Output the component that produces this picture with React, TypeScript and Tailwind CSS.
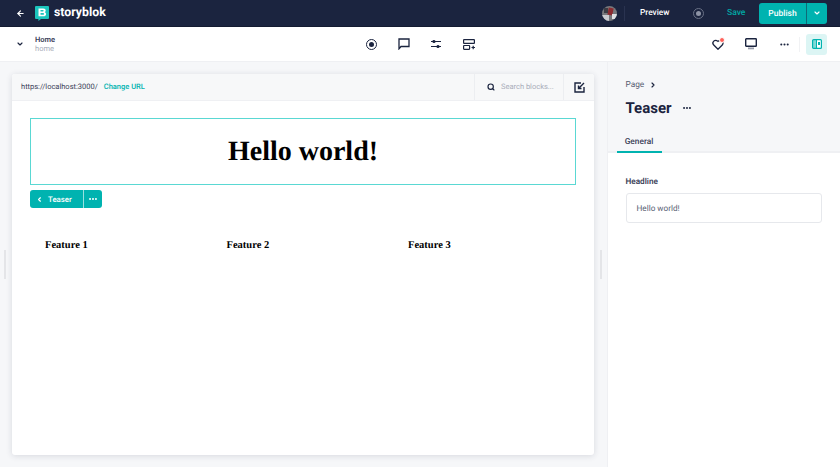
import React from 'react';
import { ArrowLeft, ChevronDown, ChevronLeft, ChevronRight, Ellipsis, Search } from 'lucide-react';

const ui = "font-['Roboto','Inter',sans-serif]";

const Logo = () => (
  <svg width="14" height="15" viewBox="0 0 14 15">
    <path d="M1 0h12a1 1 0 0 1 1 1v11a1 1 0 0 1-1 1H6l-2.600 2v-2H1a1 1 0 0 1-1-1V1a1 1 0 0 1 1-1z" fill="#1bc5bd" />
    <path d="M3.500 2.500h4.700c1.600 0 2.500.9 2.500 2.100 0 .7-.3 1.200-.9 1.600.8.300 1.300 1 1.300 1.800 0 1.400-1.100 2.300-2.700 2.300H3.500V2.500zm2 1.600v1.500h2.300c.5 0 .9-.3.9-.8s-.4-.7-.9-.7H5.500zm0 3v1.700h2.500c.6 0 1-.3 1-.9s-.4-.8-1-.8H5.500z" fill="#ffffff" fillRule="evenodd" />
  </svg>
);

const Avatar = () => (
  <div className="relative h-[15px] w-[15px] overflow-hidden rounded-full bg-[#77787c]">
    <div className="absolute left-[6px] top-[2px] h-[7px] w-[5px] rotate-12 bg-[#8c2b30]" />
    <div className="absolute left-0 top-[9px] h-[6px] w-[7px] bg-[#c9cbd0]" />
    <div className="absolute left-[10px] top-[8px] h-[5px] w-[5px] bg-[#dfe0e3]" />
    <div className="absolute left-[2px] top-[2px] h-[5px] w-[4px] bg-[#3b3d45]" />
  </div>
);

const TopBar = () => (
  <header className="flex h-[27px] shrink-0 items-center border-b border-[#141b31] bg-[#1b243f]">
    <ArrowLeft size={9} strokeWidth={3} className="ml-[16px] text-white" />
    <div className="ml-[10px] flex items-center"><Logo /></div>
    <span className={`${ui} ml-[5px] mt-[1px] text-[12.300px] font-bold text-white`}>storyblok</span>
    <div className="ml-auto flex items-center">
      <Avatar />
      <div className="ml-[7px] h-[15px] w-px bg-[#2a3350]" />
      <span className={`${ui} ml-[15px] mt-[1px] w-[29px] whitespace-nowrap text-[8.300px] font-medium text-white`}>Preview</span>
      <div className="ml-[24px] flex h-[11px] w-[11px] items-center justify-center rounded-full border border-[#6a7186]">
        <div className="h-[5px] w-[5px] rounded-full bg-[#8d93a5]" />
      </div>
      <span className={`${ui} ml-[23px] mt-[1px] w-[18px] whitespace-nowrap text-[8.500px] font-medium text-[#00a8a5]`}>Save</span>
      <div className="ml-[14px] mr-[13px] flex h-[21px] overflow-hidden rounded-[3px] bg-[#00b3b0]">
        <span className={`${ui} flex w-[47px] items-center justify-center pt-[2px] text-[8.500px] font-medium text-white`}>Publish</span>
        <div className="flex w-[21px] items-center justify-center border-l border-[#1b243f]/50">
          <ChevronDown size={8} strokeWidth={3.500} className="text-white" />
        </div>
      </div>
    </div>
  </header>
);

const SubBar = () => (
  <div className="flex h-[35px] shrink-0 items-center border-b border-[#eff0f3] bg-white">
    <ChevronDown size={8} strokeWidth={3.500} className="ml-[16px] text-[#1b243f]" />
    <div className={`${ui} ml-[11px] flex w-[24px] flex-col pt-[1px] leading-[8.500px]`}>
      <span className="text-[7.500px] font-semibold text-[#3b4158]">Home</span>
      <span className="text-[7.500px] text-[#a9adb9]">home</span>
    </div>
    <div className="ml-[307px] flex items-center text-[#1b243f]">
      <div className="flex h-[11px] w-[11px] items-center justify-center rounded-full border-[1.500px] border-[#1b243f]">
        <div className="h-[5px] w-[5px] rounded-full bg-[#1b243f]" />
      </div>
      <svg className="ml-[21px]" width="12" height="12" viewBox="0 0 12 12" fill="none" stroke="#1b243f" strokeWidth="1.300">
        <path d="M1 1h10v7.500H3L1 10.800V1z" />
      </svg>
      <svg className="ml-[20px]" width="12" height="10" viewBox="0 0 12 10" fill="none" stroke="#1b243f" strokeWidth="1.200">
        <path d="M1 2.500h10M1 7.500h10" />
        <circle cx="4" cy="2.500" r="1" fill="#1b243f" />
        <circle cx="8" cy="7.500" r="1" fill="#1b243f" />
      </svg>
      <svg className="ml-[21px]" width="12" height="11" viewBox="0 0 12 11" fill="none" stroke="#1b243f" strokeWidth="1.200">
        <rect x="0.600" y="0.600" width="10.800" height="3.800" rx="0.500" />
        <rect x="0.600" y="6.500" width="6" height="3.800" rx="0.500" />
        <path d="M8.500 8.500h3.500M10.200 6.700v3.600" />
      </svg>
    </div>
    <div className="ml-auto flex items-center">
      <div className="relative">
        <svg width="12" height="11" viewBox="0 0 24 22" fill="none" stroke="#1b243f" strokeWidth="2.600">
          <path d="M12 20.500 3.500 12a5.500 5.500 0 0 1 7.800-7.800l.7.700.7-.7a5.500 5.500 0 0 1 7.800 7.800L12 20.500z" />
        </svg>
        <div className="absolute -right-[1px] -top-[2px] h-[6px] w-[6px] rounded-full border border-white bg-[#ff6159]" />
      </div>
      <svg className="ml-[21px]" width="12" height="12" viewBox="0 0 12 12" fill="none">
        <rect x="0.700" y="0.700" width="10.600" height="7.600" rx="0.600" stroke="#1b243f" strokeWidth="1.400" />
        <rect x="3" y="9.500" width="6" height="1.800" fill="#9a9eac" />
      </svg>
      <Ellipsis size={11} strokeWidth={2.500} className="ml-[22px] text-[#1b243f]" />
      <div className="ml-[9px] h-[15px] w-px bg-[#f1f2f4]" />
      <div className="ml-[6px] mr-[13px] flex h-[21px] w-[21px] items-center justify-center rounded-[3px] bg-[#dcf5f4]">
        <svg width="10" height="10" viewBox="0 0 10 10">
          <rect x="0.600" y="0.600" width="8.800" height="8.800" rx="1" fill="#ffffff" stroke="#00b3b0" strokeWidth="1.200" />
          <rect x="1" y="1" width="3.500" height="8" fill="#00b3b0" fillOpacity="0.5" />
          <path d="M4.500 1v8" stroke="#00b3b0" strokeWidth="1" />
          <rect x="6" y="3" width="2" height="3" fill="#00b3b0" />
        </svg>
      </div>
    </div>
  </div>
);

const Canvas = () => (
  <div className="flex flex-1 flex-col rounded-[3px] bg-white shadow-[0_1px_6px_rgba(27,36,63,0.14)]">
    <div className="flex h-[27px] shrink-0 items-center rounded-t-[3px] border-b border-[#eff0f3] bg-[#f7f8f9]">
      <span className={`${ui} ml-[9px] text-[7.500px] text-[#3b4158]`}>https://localhost:3000/</span>
      <span className={`${ui} ml-[6px] text-[7.500px] font-medium text-[#00b3b0]`}>Change URL</span>
      <div className="ml-auto flex h-full items-center border-l border-[#eceef1] pl-[12px]">
        <Search size={8} strokeWidth={3.500} className="text-[#1b243f]" />
        <span className={`${ui} ml-[6px] w-[62px] whitespace-nowrap text-[7.500px] text-[#a9adb9]`}>Search blocks...</span>
      </div>
      <div className="flex h-full w-[31px] items-center justify-center border-l border-[#eceef1]">
        <svg width="11" height="11" viewBox="0 0 11 11" fill="none" stroke="#1b243f" strokeWidth="1.400">
          <path d="M7 1H1v9h9V5" />
          <path d="M10 1 5 6M4.500 3.500V6.500H7.500" />
        </svg>
      </div>
    </div>
    <div className="flex flex-1 flex-col px-[18px] pt-[17px]">
      <div className="flex h-[67px] items-center justify-center border border-[#5ad8d3]">
        <h1 className="font-['Liberation_Serif',serif] text-[28px] font-bold text-black">Hello world!</h1>
      </div>
      <div className={`${ui} mt-[5px] flex h-[18px] w-[72px] overflow-hidden rounded-[3px] bg-[#00b3b0] text-white`}>
        <div className="flex w-[54px] items-center border-r border-white/60">
          <ChevronLeft size={7} strokeWidth={4} className="ml-[6px]" />
          <span className="ml-[5px] pt-[1px] text-[7.800px] font-medium">Teaser</span>
        </div>
        <div className="flex flex-1 items-center justify-center">
          <Ellipsis size={10} strokeWidth={3} />
        </div>
      </div>
      <div className="mt-[31px] grid grid-cols-[181.500px_181.500px_1fr] pl-[15px] font-['Liberation_Serif',serif] text-[10.500px] font-bold leading-[14px] text-black">
        <span>Feature 1</span>
        <span>Feature 2</span>
        <span>Feature 3</span>
      </div>
    </div>
  </div>
);

const SidePanel = () => (
  <aside className={`${ui} flex w-[233px] shrink-0 flex-col border-l border-[#eff0f3] bg-white`}>
    <div className="flex h-[91px] shrink-0 flex-col border-b-2 border-[#eff0f3] bg-[#f6f7f9] pl-[17.500px] pr-[18px]">
      <div className="mt-[17px] flex items-center">
        <span className="w-[18px] text-[8.300px] text-[#585e73]">Page</span>
        <ChevronRight size={8} strokeWidth={3.500} className="ml-[5px] text-[#1b243f]" />
      </div>
      <div className="mt-[8px] flex items-center">
        <span className="text-[15px] font-bold leading-[18px] text-[#1b243f]">Teaser</span>
        <Ellipsis size={10} strokeWidth={3} className="ml-[10px] text-[#1b243f]" />
      </div>
      <div className="-ml-[9px] mt-auto -mb-[2px] w-[45px] border-b-2 border-[#00b3b0] pb-[2.500px] text-center text-[8.300px] font-medium text-[#3b4158]">General</div>
    </div>
    <div className="flex flex-col pl-[17.500px] pt-[23px]">
      <span className="text-[8.200px] font-semibold text-[#3b4158]">Headline</span>
      <div className="mt-[4.500px] flex h-[30px] w-[196px] items-center rounded-[3px] border border-[#e6e8ec] pl-[10px] pt-[2px] text-[8.200px] text-[#585e73]">Hello world!</div>
    </div>
  </aside>
);

export default function App() {
  return (
    <div className="flex h-[467px] w-[840px] flex-col overflow-hidden bg-white [text-rendering:geometricPrecision]">
      <TopBar />
      <SubBar />
      <main className="flex min-h-0 flex-1">
        <div className="relative flex flex-1 bg-[#f6f7f9] pb-[12px] pl-[12px] pr-[13px] pt-[12px]">
          <Canvas />
          <div className="absolute left-[4px] top-[188px] h-[29px] w-[2px] bg-[#e4e5e8]" />
          <div className="absolute right-[5px] top-[188px] h-[29px] w-[2px] bg-[#e4e5e8]" />
        </div>
        <SidePanel />
      </main>
    </div>
  );
}
